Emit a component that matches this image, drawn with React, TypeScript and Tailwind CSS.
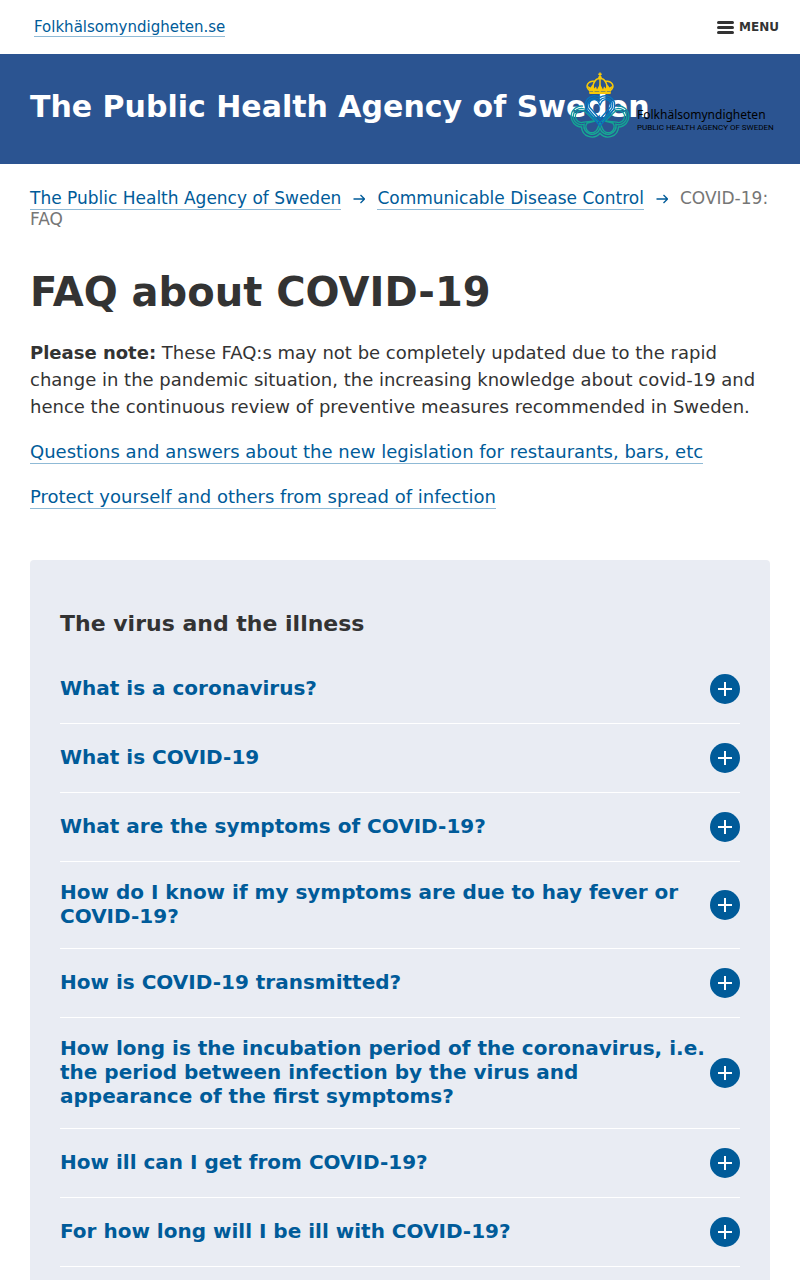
const questions = [
  'What is a coronavirus?',
  'What is COVID-19',
  'What are the symptoms of COVID-19?',
  'How do I know if my symptoms are due to hay fever or COVID-19?',
  'How is COVID-19 transmitted?',
  'How long is the incubation period of the coronavirus, i.e. the period between infection by the virus and appearance of the first symptoms?',
  'How ill can I get from COVID-19?',
  'For how long will I be ill with COVID-19?',
];

const link = 'border-b border-[#8fbad6] pb-px text-[#005b99]';

function Emblem() {
  return (
    <svg className="h-[66px] w-[61px] shrink-0" viewBox="0 0 61 66" fill="none" aria-hidden="true">
      <defs>
        <linearGradient id="lobe" x1="0" y1="34" x2="0" y2="66" gradientUnits="userSpaceOnUse">
          <stop offset="0" stopColor="#0d8fa5" />
          <stop offset="0.5" stopColor="#12a594" />
          <stop offset="1" stopColor="#17ac93" />
        </linearGradient>
      </defs>
      <g stroke="url(#lobe)" strokeWidth="1.4">
        <path d="M13.1 34.1A10.5 10.5 0 1 0 11.5 55A10.5 10.5 0 0 0 30 61.3A10.5 10.5 0 0 0 48.5 55A10.5 10.5 0 1 0 46.900 34.1" />
        <path d="M28 50L17 38.500A8.200 8.200 0 1 0 14.100 52.300A8.200 8.200 0 0 0 30 56.300A8.200 8.200 0 0 0 45.900 52.300A8.200 8.200 0 1 0 43 38.500L32 50" />
        <path d="M25 49L15.700 40.200A6 6 0 1 0 13.600 50.100L25 49L17.200 51A6 6 0 1 0 27.500 56.800L30 51L32.500 56.800A6 6 0 1 0 42.800 51L35 49L46.400 50.100A6 6 0 1 0 44.300 40.200L35 49" />
      </g>
      <g stroke="#0874bd" strokeWidth="1.4">
        <path d="M30 54L17.800 39.700A9.500 9.500 0 0 1 30 25.300A9.500 9.500 0 0 1 42.200 39.700Z" />
        <path d="M30 50.500L19.300 38.200A7.300 7.300 0 0 1 30 28.200A7.300 7.300 0 0 1 40.700 38.200Z" />
        <path d="M30 47L20.900 36.600A5.100 5.100 0 1 1 29 31L30 33L31 31A5.100 5.100 0 1 1 39.100 36.600Z" />
      </g>
      <g stroke="#f8c908" strokeWidth="1.5">
        <path d="M30 0.500v5M28.300 2.300h3.400" />
        <path d="M20 19C14 14 18 9 25 9C26 7 28 6.500 30 6.500C32 6.500 34 7 35 9C42 9 46 14 40 19" />
        <path d="M25 9C22 13 23 17 24 20M35 9C38 13 37 17 36 20M30 7V20" />
      </g>
      <path fill="#f8c908" d="M19 19.500h22l-0.500 2.500h-21zM20 19l-3-5.500 3.500 2L22.500 12.500l1.500 4 2-2 1 3 3-5.500 3 5.500 1-3 2 2 1.500-4 2 3 3.500-2-3 5.500z" />
      <circle cx="30" cy="5.500" r="1.800" fill="#f8c908" />
    </svg>
  );
}

function Plus() {
  return (
    <svg className="size-[30px] shrink-0 translate-y-px" viewBox="0 0 30 30" aria-hidden="true">
      <circle cx="15" cy="15" r="15" fill="#005b99" />
      <path d="M8 15h14M15 8v14" stroke="#fff" strokeWidth="2" />
    </svg>
  );
}

function Arrow() {
  return (
    <svg className="mx-3 inline-block size-3 align-[-1px]" viewBox="0 0 12 12" fill="none" stroke="#005b99" strokeWidth="1.300" aria-hidden="true">
      <path d="M0.500 6h11M7.500 2l4 4-4 4" />
    </svg>
  );
}

export default function App() {
  return (
    <div className="bg-white font-['DejaVu_Sans',sans-serif] text-lg leading-[27px] text-[#333]">
      <div className="flex h-[54px] items-center justify-between pr-[21px] pl-[34px]">
        <a href="#" className="border-b border-[#8fbad6] text-[15px] leading-[18px] text-[#005b99]">Folkhälsomyndigheten.se</a>
        <button className="flex items-center gap-[5px] text-xs font-bold">
          <svg className="h-[13px] w-[17px]" viewBox="0 0 17 13" fill="#333" aria-hidden="true">
            <rect width="17" height="3" rx="1.500" />
            <rect y="5" width="17" height="3" rx="1.500" />
            <rect y="10" width="17" height="3" rx="1.500" />
          </svg>
          MENU
        </button>
      </div>

      <header className="relative flex h-[110px] items-center bg-[#2b5491] px-[30px]">
        <p className="pb-1 text-[30px] leading-9 font-bold text-white">The Public Health Agency of Sweden</p>
        <a href="#" className="absolute top-[18px] right-[30px] flex w-[200px] gap-1.5 text-black">
          <Emblem />
          <span className="flex flex-col pt-[34px] whitespace-nowrap">
            <span className="font-['Noto_Sans',sans-serif] text-xs leading-[17px]">Folkhälsomyndigheten</span>
            <span className="font-[Roboto,sans-serif] text-[8px] leading-[10px]">PUBLIC HEALTH AGENCY OF SWEDEN</span>
          </span>
        </a>
      </header>

      <main className="px-[30px]">
        <nav aria-label="Breadcrumb" className="pt-6 text-[17px] leading-[21px] text-[#767676]">
          <a href="#" className={link}>The Public Health Agency of Sweden</a>
          <Arrow />
          <a href="#" className={link}>Communicable Disease Control</a>
          <Arrow />
          <span>COVID-19: FAQ</span>
        </nav>

        <h1 className="mt-9 text-[40px] leading-[52px] font-bold">FAQ about COVID-19</h1>
        <p className="mt-[21px]">
          <strong>Please note:</strong> These FAQ:s may not be completely updated due to the rapid change in the
          pandemic situation, the increasing knowledge about covid-19 and hence the continuous review of preventive
          measures recommended in Sweden.
        </p>
        <p className="mt-[18px]">
          <a href="#" className={link}>Questions and answers about the new legislation for restaurants, bars, etc</a>
        </p>
        <p className="mt-[18px]">
          <a href="#" className={link}>Protect yourself and others from spread of infection</a>
        </p>

        <section className="mt-[50px] rounded-t bg-[#e9ecf3] px-[30px] pt-[50px]">
          <h2 className="mb-[18px] text-[22px] leading-[27px] font-bold">The virus and the illness</h2>
          <ul>
            {questions.map((question) => (
              <li key={question} className="border-b border-white">
                <button className="flex w-full items-center justify-between pt-[18px] pb-5 text-left text-xl leading-6 font-bold text-[#005b99]">
                  <span>{question}</span>
                  <Plus />
                </button>
              </li>
            ))}
          </ul>
          <div className="h-[13px]" />
        </section>
      </main>
    </div>
  );
}
